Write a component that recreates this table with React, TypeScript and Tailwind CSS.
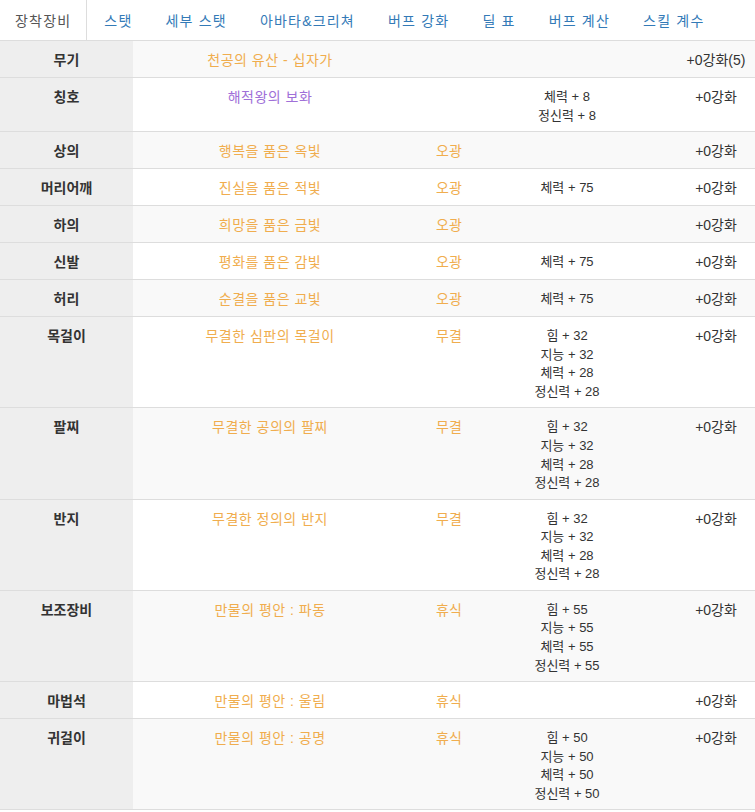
const tabs = ['장착장비', '스탯', '세부 스탯', '아바타&크리쳐', '버프 강화', '딜 표', '버프 계산', '스킬 계수'];

type Row = { slot: string; name: string; purple?: boolean; grade?: string; stats: string[]; up: string };

const rows: Row[] = [
  { slot: '무기', name: '천공의 유산 - 십자가', stats: [], up: '+0강화(5)' },
  { slot: '칭호', name: '해적왕의 보화', purple: true, stats: ['체력 + 8', '정신력 + 8'], up: '+0강화' },
  { slot: '상의', name: '행복을 품은 옥빛', grade: '오광', stats: [], up: '+0강화' },
  { slot: '머리어깨', name: '진실을 품은 적빛', grade: '오광', stats: ['체력 + 75'], up: '+0강화' },
  { slot: '하의', name: '희망을 품은 금빛', grade: '오광', stats: [], up: '+0강화' },
  { slot: '신발', name: '평화를 품은 감빛', grade: '오광', stats: ['체력 + 75'], up: '+0강화' },
  { slot: '허리', name: '순결을 품은 교빛', grade: '오광', stats: ['체력 + 75'], up: '+0강화' },
  { slot: '목걸이', name: '무결한 심판의 목걸이', grade: '무결', stats: ['힘 + 32', '지능 + 32', '체력 + 28', '정신력 + 28'], up: '+0강화' },
  { slot: '팔찌', name: '무결한 공의의 팔찌', grade: '무결', stats: ['힘 + 32', '지능 + 32', '체력 + 28', '정신력 + 28'], up: '+0강화' },
  { slot: '반지', name: '무결한 정의의 반지', grade: '무결', stats: ['힘 + 32', '지능 + 32', '체력 + 28', '정신력 + 28'], up: '+0강화' },
  { slot: '보조장비', name: '만물의 평안 : 파동', grade: '휴식', stats: ['힘 + 55', '지능 + 55', '체력 + 55', '정신력 + 55'], up: '+0강화' },
  { slot: '마법석', name: '만물의 평안 : 울림', grade: '휴식', stats: [], up: '+0강화' },
  { slot: '귀걸이', name: '만물의 평안 : 공명', grade: '휴식', stats: ['힘 + 50', '지능 + 50', '체력 + 50', '정신력 + 50'], up: '+0강화' },
];

export default function App() {
  return (
    <div className="w-[755px] bg-white text-[#333] text-[14px] leading-[20px]" style={{ fontFamily: '"Liberation Sans", "Noto Sans CJK KR", sans-serif' }}>
      <div className="flex border-b border-[#ddd]">
        {tabs.map((t, i) => (
          <div key={t} className={i === 0
            ? 'mr-[2px] px-[15px] pt-[11px] pb-[9px] border-r border-[#ddd] text-[#555] bg-white tracking-[1.2px]'
            : 'mr-[2px] px-[15px] pt-[11px] pb-[9px] border-r border-transparent text-[#337ab7] tracking-[1.2px]'}>
            {t}
          </div>
        ))}
      </div>
      {rows.map((r, i) => (
        <div key={r.slot} className={`grid grid-cols-[133px_274px_84px_152px_1fr] border-b border-[#ddd] ${i % 2 === 0 ? 'bg-[#f9f9f9]' : 'bg-white'}`}>
          <div className="bg-[#eee] pt-[9px] pb-[7px] text-center font-bold">{r.slot}</div>
          <div className={`pt-[9px] pb-[7px] text-center tracking-[0.5px] ${r.purple ? 'text-[#a070d8]' : 'text-[#f0ad4e]'}`}>{r.name}</div>
          <div className="pt-[9px] pb-[7px] text-center text-[#f0ad4e]">{r.grade ?? ''}</div>
          <div className="pt-[10px] pb-[6px] text-center text-[13px] leading-[18.57px] min-h-[36px]">
            {r.stats.map(s => <div key={s}>{s}</div>)}
          </div>
          <div className="pt-[9px] pb-[7px] pl-[34px] text-center">{r.up}</div>
        </div>
      ))}
    </div>
  );
}
